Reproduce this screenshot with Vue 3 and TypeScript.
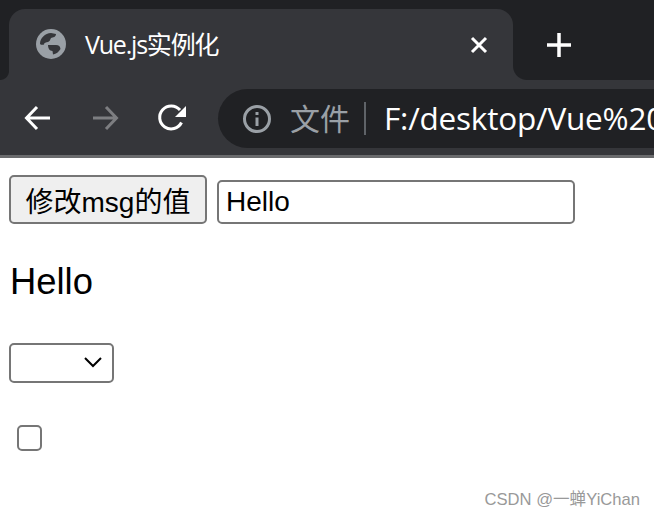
<script setup lang="ts">
import { ref } from 'vue'
const msg = ref('Hello')
</script>

<template>
  <div class="page">
    <header class="chrome">
      <div class="tabstrip">
        <div class="tab">
          <svg class="globe" viewBox="0 0 30 30" width="30" height="30">
            <circle cx="15" cy="15" r="15" fill="#9aa0a6" />
            <path d="M4 15C4 9 9 4.500 15 4l5 1c0 3-3 3.500-5 4-1 2-1 3-3 4-2 .5-4 .5-4 2.500-1 .5-3 .5-4-.500z" fill="#35363a" />
            <path d="M12 16h8c3 0 4 1 4.500 4-2 3-4 5-7.500 5.500l-.5-3.500c-3 0-4.500-3-4.500-6z" fill="#35363a" />
          </svg>
          <span class="title">Vue.js实例化</span>
          <svg class="close" viewBox="0 0 18 18" width="18" height="18">
            <path d="M2 2l14 14M16 2L2 16" stroke="#fff" stroke-width="3" fill="none" />
          </svg>
        </div>
        <svg class="plus" viewBox="0 0 26 26" width="26" height="26">
          <path d="M13 1v24M1 13h24" stroke="#fff" stroke-width="3.500" fill="none" />
        </svg>
      </div>
      <div class="toolbar">
        <svg class="nav" viewBox="0 0 30 30" width="30" height="30">
          <path d="M27 15H4M14 4L3.500 15 14 26" stroke="#fff" stroke-width="3" fill="none" />
        </svg>
        <svg class="nav" viewBox="0 0 30 30" width="30" height="30">
          <path d="M3 15h23M16 4l10.500 11L16 26" stroke="#7d7e81" stroke-width="3" fill="none" />
        </svg>
        <svg class="nav" viewBox="0 0 30 30" width="30" height="30">
          <path d="M24.500 19.500A11.500 11.500 0 1 1 23 7" stroke="#fff" stroke-width="3" fill="none" />
          <path d="M29 3v11H18z" fill="#fff" />
        </svg>
        <div class="omnibox">
          <svg class="info" viewBox="0 0 30 30" width="30" height="30">
            <circle cx="15" cy="15" r="12.500" stroke="#9aa0a6" stroke-width="3" fill="none" />
            <path d="M13.500 13.500h3V22h-3zM13.500 8h3v3h-3z" fill="#9aa0a6" />
          </svg>
          <span class="scheme">文件</span>
          <span class="divider"></span>
          <span class="url">F:/desktop/Vue%20</span>
        </div>
      </div>
    </header>

    <main class="content">
      <div class="controls">
        <button class="btn" type="button">修改msg的值</button>
        <input v-model="msg" class="field" type="text" />
      </div>
      <p class="output">{{ msg }}</p>
      <div class="picker-wrap">
        <select class="picker">
          <option></option>
        </select>
        <svg class="chevron" viewBox="0 0 18 11" width="18" height="11">
          <path d="M1 1l8 8 8-8" stroke="#000" stroke-width="2" fill="none" />
        </svg>
      </div>
      <input class="check" type="checkbox" />
    </main>

    <div class="mark">CSDN @一蝉YiChan</div>
  </div>
</template>

<style>
html, body { margin: 0; background: #fff; overflow: hidden; }
</style>

<style scoped>
.page {
  position: relative;
  width: 654px;
  height: 518px;
  overflow: hidden;
  font-family: "Liberation Sans", "Noto Sans CJK SC", sans-serif;
  color: #000;
}
.chrome { display: flex; flex-direction: column; }
.tabstrip {
  display: flex;
  align-items: center;
  height: 80px;
  padding: 9px 0 0 9px;
  box-sizing: border-box;
  background: #202124;
}
.tab {
  position: relative;
  display: flex;
  align-items: center;
  width: 504px;
  height: 71px;
  padding: 0 0 0 27px;
  box-sizing: border-box;
  background: #35363a;
  border-radius: 16px 16px 0 0;
  flex-shrink: 0;
}
.tab::before,
.tab::after {
  content: "";
  position: absolute;
  bottom: 0;
}
.tab::before {
  left: -9px;
  width: 9px;
  height: 9px;
  background: radial-gradient(circle at 0 0, #202124 8.5px, #35363a 9.5px);
}
.tab::after {
  right: -14px;
  width: 14px;
  height: 14px;
  background: radial-gradient(circle at 100% 0, #202124 13.5px, #35363a 14.5px);
}
.globe { flex-shrink: 0; margin-top: -1px; }
.title {
  margin-left: 19px;
  font: 25px/30px "Open Sans", "Noto Sans CJK SC", sans-serif;
  letter-spacing: -1.2px;
  color: #fff;
  flex: 1;
  white-space: nowrap;
  margin-top: -2px;
}
.close { margin-right: 25px; }
.plus { margin: 0 0 0 33px; }
.toolbar {
  display: flex;
  align-items: center;
  height: 75px;
  padding: 2px 0 0 23px;
  box-sizing: border-box;
  background: #35363a;
}
.nav { flex-shrink: 0; margin: -2px 37px 0 0; }
.nav:nth-child(3) { margin-right: 31px; }
.omnibox {
  display: flex;
  align-items: center;
  flex: 1;
  height: 59px;
  padding-left: 24px;
  background: #202124;
  border-radius: 30px 0 0 30px;
  white-space: nowrap;
  overflow: hidden;
}
.info { flex-shrink: 0; }
.scheme {
  margin-left: 18px;
  margin-top: -3px;
  font: 30px/40px "Noto Sans CJK SC", sans-serif;
  color: #9aa0a6;
}
.divider { width: 2px; height: 33px; margin: 0 18px 0 14px; background: #5f6368; flex-shrink: 0; }
.url {
  font: 31.5px/40px "Open Sans", sans-serif;
  margin-top: -2px;
  color: #fff;
  letter-spacing: -0.2px;
}
.content {
  display: flex;
  flex-direction: column;
  align-items: flex-start;
  border-top: 3px solid #6a6b6d;
  padding: 17px 0 0 9px;
}
.controls { display: flex; align-items: flex-end; gap: 10px; }
.btn {
  width: 198px;
  height: 49px;
  padding: 0;
  border: 2px solid #767676;
  border-radius: 5px;
  background: #efefef;
  font: 28px "Liberation Sans", "Noto Sans CJK SC", sans-serif;
  color: #000;
}
.field {
  width: 358px;
  height: 44px;
  padding: 0 7px;
  box-sizing: border-box;
  border: 2px solid #767676;
  border-radius: 5px;
  font: 28px "Liberation Sans", sans-serif;
  color: #000;
  outline: none;
}
.output {
  margin: 37px 0 0 1px;
  font-size: 36.4px;
  line-height: 42px;
}
.picker-wrap {
  position: relative;
  margin-top: 40px;
  width: 105px;
  height: 40px;
}
.picker {
  display: block;
  appearance: none;
  width: 105px;
  height: 40px;
  border: 2px solid #767676;
  border-radius: 5px;
  background: #fff;
  font: 28px "Liberation Sans", sans-serif;
}
.chevron {
  position: absolute;
  left: 75px;
  top: 14px;
  pointer-events: none;
}
.check {
  appearance: none;
  width: 25px;
  height: 26px;
  margin: 42px 0 0 8px;
  border: 2px solid #767676;
  border-radius: 5px;
  background: #fff;
  box-sizing: border-box;
}
.mark {
  position: absolute;
  right: 14px;
  top: 489px;
  font-size: 16.6px;
  line-height: 22px;
  color: #999;
  white-space: nowrap;
}
</style>
